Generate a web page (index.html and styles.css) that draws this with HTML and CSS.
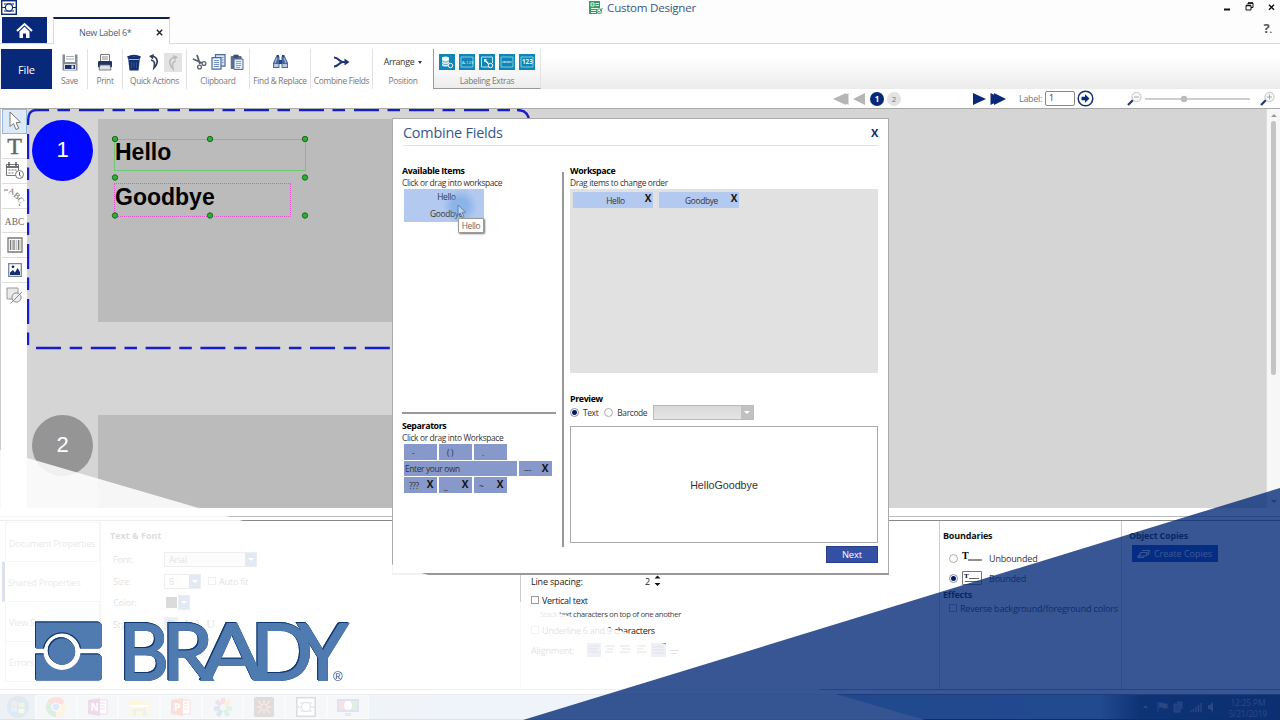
FILE: index.html
```html
<!DOCTYPE html>
<html lang="en">
<head>
    <meta charset="UTF-8">
    <title>Custom Designer</title>
    <link rel="stylesheet" href="styles.css">
</head>
<body>

<div class="app">
    <header class="titlebar">
        <svg class="app-logo" width="16" height="15" viewBox="0 0 16 15"><rect x=".7" y=".7" width="14.6" height="13.6" fill="#fff" stroke="#0b2a72" stroke-width="1.4"/><path d="M1 7.5h3M12 7.5h3M3 4h10M3 11h10" stroke="#0b2a72" stroke-width="1"/><circle cx="8" cy="7.5" r="3.6" fill="#fff" stroke="#0b2a72" stroke-width="1.2"/></svg>
        <div class="app-title">
            <svg width="14" height="14" viewBox="0 0 14 14"><path d="M0 0h11v7h-3v6H0z" fill="#3c9a67"/><path d="M2 2h3v3H2zM6.5 2.5H10M6.5 4.500H10M2 7.5h6M2 9.5h5M2 11.5h5" stroke="#e4f5ea" stroke-width="1" fill="none"/><circle cx="10.3" cy="10.2" r="2.4" fill="#fff" stroke="#3c9a67"/><path d="M9 10l1.2 1.2L13.5 7" fill="none" stroke="#3c9a67"/></svg>
            <span>Custom Designer</span>
        </div>
        <div class="window-buttons">
            <svg width="60" height="14" viewBox="0 0 60 14"><path d="M4 9.500h6" stroke="#111" stroke-width="2"/><path d="M28 4.500V3h5v4.500h-2M26 5.500h5v4.500h-5z" fill="none" stroke="#111" stroke-width="1"/><path d="M26 5.500h5M28 3h5" stroke="#111" stroke-width="1.500"/><path d="M49 4.700l5 5M54 4.700l-5 5" stroke="#111" stroke-width="1.400"/></svg>
        </div>
    </header>

    <nav class="tabs">
        <div class="home">
            <svg width="17" height="17" viewBox="0 0 17 17"><path d="M1 9L8.500 2 16 9" fill="none" stroke="#fff" stroke-width="2"/><path d="M3.500 9.500l5-4.700 5 4.700V16H10v-4.500H7V16H3.500z" fill="#fff"/></svg>
        </div>
        <div class="tab"><span>New Label 6*</span><svg width="7" height="7" viewBox="0 0 7 7"><path d="M.8.8l5.400 5.400M6.200.8L.8 6.200" stroke="#222" stroke-width="1.400"/></svg></div>
        <div class="help">?<small>.</small></div>
    </nav>

    <div class="ribbon">
        <div class="file">File</div>
        <div class="group save">
            <div class="icons"><svg width="16" height="17" viewBox="0 0 16 17"><path d="M.5.500h15v16H.5z" fill="#868b95"/><path d="M3 0h10v8H3z" fill="#fff"/><path d="M4 2.500h8M4 5h8" stroke="#aaa"/><path d="M2.500 10.500h11v5h-11z" fill="#17306f" stroke="#fff" stroke-width=".8"/><path d="M9.500 11.500h2v3h-2z" fill="#fff"/></svg></div>
            <span>Save</span>
        </div>
        <div class="group print">
            <div class="icons"><svg width="16" height="17" viewBox="0 0 16 17"><path d="M3.500.500h9V8h-9z" fill="#fff" stroke="#777"/><path d="M5 3h6M5 5h6" stroke="#888"/><rect x="1" y="7" width="14" height="6.500" rx="1" fill="#203468"/><path d="M3 11h10l1 5H2z" fill="#dce1eb" stroke="#666" stroke-width=".8"/></svg></div>
            <span>Print</span>
        </div>
        <div class="group quick">
            <div class="icons">
                <svg width="14" height="17" viewBox="0 0 14 17"><path d="M1 3h12l-1.500 13.500h-9z" fill="#14306f"/><path d="M.5 3.500Q7 0 13.500 3.500" fill="none" stroke="#14306f" stroke-width="2"/><path d="M2 5.500h10" stroke="#9db0d8"/><path d="M4.500 8v6M7 8v6M9.500 8v6" stroke="#36569a" stroke-width=".8"/></svg>
                <svg class="undo" width="12" height="16" viewBox="0 0 12 16"><path d="M4 2C10 3 11 9 6 14c1-5 1-7-3-8" fill="none" stroke="#313c59" stroke-width="1.700"/><path d="M6 0L1 2l4 3.500z" fill="#313c59"/></svg>
                <span class="redo"><svg width="12" height="16" viewBox="0 0 12 16"><path d="M8 2C2 3 1 9 6 14c-1-5-1-7 3-8" fill="none" stroke="#bcbcbc" stroke-width="1.600"/><path d="M6 0l5 2-4 3.500z" fill="#bcbcbc"/></svg></span>
            </div>
            <span>Quick Actions</span>
        </div>
        <div class="group clipboard">
            <div class="icons">
                <svg width="15" height="16" viewBox="0 0 15 16"><path d="M5 1l3 9M1 5l9 4" stroke="#56606c" stroke-width="1.800"/><circle cx="12" cy="9.500" r="1.900" fill="none" stroke="#56606c" stroke-width="1.300"/><circle cx="7.500" cy="13" r="1.900" fill="none" stroke="#56606c" stroke-width="1.300"/></svg>
                <svg width="15" height="16" viewBox="0 0 15 16"><path d="M4.500.700H14v11.500H4.500z" fill="#d9e5f6" stroke="#49699c" stroke-width="1.200"/><path d="M1 3.700h9v11.500H1z" fill="#eaf1fb" stroke="#49699c" stroke-width="1.200"/><path d="M3 6.500h5M3 8.500h5M3 10.500h5M3 12.500h5M11 3.500h1.500M11 6h1.500M11 8.500h1.500" stroke="#6a88b7" stroke-width=".9"/></svg>
                <svg width="14" height="16" viewBox="0 0 14 16"><rect x=".7" y="2" width="11" height="13" rx="1" fill="#5f6e8b"/><path d="M3.500.700h5v3h-5z" fill="#384b70"/><path d="M4 5h9v10.400H4z" fill="#e4edfa" stroke="#4d689a"/><path d="M6 7.500h5M6 9.500h5M6 11.500h5M6 13.500h4" stroke="#7690ba" stroke-width=".8"/></svg>
            </div>
            <span>Clipboard</span>
        </div>
        <div class="group find">
            <div class="icons"><svg width="17" height="16" viewBox="0 0 17 16"><path d="M4 2.500h3.500V14H1V9z" fill="#4767a0"/><path d="M13 2.500H9.500V14H16V9z" fill="#4767a0"/><path d="M4.500 1h2.500v2H4.500zM10 1h2.500v2H10zM7 6h3v4H7z" fill="#25437e"/><path d="M2 10h4.500v3H2zM10.500 10H15v3h-4.500z" fill="#b7cbe9"/><path d="M5 4L3 9M12 4l2 5" stroke="#9ab3dc" stroke-width="1.300"/></svg></div>
            <span>Find &amp; Replace</span>
        </div>
        <div class="group combine">
            <div class="icons"><svg width="17" height="12" viewBox="0 0 17 12"><path d="M1 1.500c5 0 5 4.500 9 4.500M1 10.500c5 0 5-4.500 9-4.500h3" fill="none" stroke="#1f3572" stroke-width="2"/><path d="M11.500 2.500L16.500 6l-5 3.500z" fill="#1f3572"/></svg></div>
            <span>Combine Fields</span>
        </div>
        <div class="group position">
            <div class="icons arrange">Arrange <i class="caret"></i></div>
            <span>Position</span>
        </div>
        <div class="group extras">
            <div class="icons">
                <svg class="tile" width="16" height="16" viewBox="0 0 16 16"><path d="M3 4v7c0 2 7 2 7 0V4" fill="#e4f5fb"/><ellipse cx="6.500" cy="4" rx="3.500" ry="1.500" fill="#fff"/><path d="M3 6.500c0 2 7 2 7 0M3 9c0 2 7 2 7 0" fill="none" stroke="#0f86b5" stroke-width=".7"/><circle cx="11.500" cy="11.500" r="2.200" fill="#0f86b5" stroke="#fff"/></svg>
                <svg class="tile" width="16" height="16" viewBox="0 0 16 16"><path d="M2 3h12v10H2z" fill="none" stroke="#8ed0e6" stroke-width=".9"/><text x="3" y="9.600" font-size="4.300">A-123</text></svg>
                <svg class="tile" width="16" height="16" viewBox="0 0 16 16"><path d="M10 13H2.500V3h11v6" fill="none" stroke="#bde5f2"/><path d="M5 5l3 .2-1 1 3 3-1 1-3-3-1 1z" fill="#fff"/><circle cx="11.500" cy="11.500" r="2.200" fill="#0f86b5" stroke="#fff"/></svg>
                <svg class="tile" width="16" height="16" viewBox="0 0 16 16"><path d="M2 3h12v10H2z" fill="none" stroke="#8ed0e6" stroke-width=".9"/><path d="M3.500 8h9" stroke="#9ed7ea" stroke-width="2" stroke-dasharray="1 .4"/></svg>
                <svg class="tile" width="16" height="16" viewBox="0 0 16 16"><path d="M2 3h12v10H2z" fill="none" stroke="#8ed0e6" stroke-width=".9"/><text x="3" y="10.300" font-size="6.300" font-weight="bold">123</text></svg>
            </div>
            <span>Labeling Extras</span>
        </div>
    </div>

    <div class="pager">
        <svg width="34" height="14" viewBox="0 0 34 14"><path d="M0 7l13-6v12zM5 7l10.500-6v12zM20 7l12-6v12z" fill="#b5b5b5"/></svg>
        <span class="page active">1</span>
        <span class="page">2</span>
        <svg class="forward" width="34" height="14" viewBox="0 0 34 14"><path d="M0 1l13 6-13 6zM17.500 1l12 6-12 6zM21 1l12 6-12 6z" fill="#08297a"/></svg>
        <span class="label-caption">Label:</span>
        <span class="label-input">1</span>
        <svg class="go" width="17" height="17" viewBox="0 0 17 17"><circle cx="8.500" cy="8.500" r="7.300" fill="#fff" stroke="#15306f" stroke-width="1.500"/><path d="M4.500 6.800H8V4.300l4.500 4.200L8 12.700v-2.500H4.500z" fill="#08297a"/></svg>
        <svg class="zoombar" width="150" height="16" viewBox="0 0 150 16"><path d="M2 14l5-5" stroke="#253b72" stroke-width="2.300"/><circle cx="10.500" cy="6" r="4.600" fill="#f7f7f7" stroke="#c2c2c2"/><path d="M8 6h5" stroke="#aaa"/><path d="M19 8h105" stroke="#bdbdbd" stroke-width="1.500"/><circle cx="58" cy="8" r="3.200" fill="#bbb"/><path d="M135 14l5-5" stroke="#253b72" stroke-width="2.300"/><circle cx="143.500" cy="6" r="4.600" fill="#f7f7f7" stroke="#c2c2c2"/><path d="M141 6h5M143.500 3.500v5" stroke="#aaa"/></svg>
    </div>

    <main class="editor">
        <aside class="tools">
            <div class="tool selected"><svg width="16" height="20" viewBox="0 0 16 20"><path d="M3 1v14.500l3.500-3 2.500 6 2.700-1.200-2.600-5.600 4.400-.5z" fill="#fff" stroke="#777"/></svg></div>
            <div class="tool tool-t">T</div>
            <div class="tool"><svg width="20" height="18" viewBox="0 0 20 18"><path d="M1.500 2.500h12v11h-12z" fill="#fff" stroke="#777"/><path d="M4 0v4M11 0v4M1.500 5h12" stroke="#444" stroke-width="1.300"/><path d="M3.500 8h8M3.500 11h6" stroke="#777" stroke-dasharray="2 1"/><circle cx="14.500" cy="12.500" r="4" fill="#fff" stroke="#777"/><path d="M14.500 10v3l1.500 1.500" fill="none" stroke="#555"/></svg></div>
            <div class="tool"><svg class="arc-text" width="22" height="20" viewBox="0 0 22 20"><path d="M0 4h4M15 18l1 2" stroke="#777"/><text x="4" y="7" transform="rotate(18 4 7)">A</text><text x="9" y="10" transform="rotate(40 9 10)">B</text><text x="13" y="13" transform="rotate(60 13 13)">C</text></svg></div>
            <div class="tool tool-abc">ABC</div>
            <div class="tool"><svg width="16" height="16" viewBox="0 0 16 16"><path d="M1 1h14v14H1z" fill="#fff" stroke="#777" stroke-width="1.300"/><path d="M3.500 3v10M7 3v10M11.500 3v10" stroke="#777" stroke-width="1.300"/><path d="M5.300 3v10M9.200 3v10M13 3v10" stroke="#999" stroke-width=".8"/></svg></div>
            <div class="tool"><svg width="14" height="14" viewBox="0 0 14 14"><path d="M.7.700h12.600v12.600H.7z" fill="#fff" stroke="#79869f" stroke-width="1.300"/><path d="M2 12V9.500L5 7l2 2.500L9.500 5 12 9v3z" fill="#14306a"/><circle cx="5" cy="3.800" r="1.400" fill="#14306a"/></svg></div>
            <div class="tool"><svg width="17" height="17" viewBox="0 0 17 17"><path d="M1 1h11v11H1z" fill="#e9e9e9" stroke="#999"/><circle cx="10.500" cy="10.500" r="4.600" fill="#eee" stroke="#888"/><path d="M4.500 16.500L16 5" stroke="#888"/></svg></div>
        </aside>
        <div class="canvas">
            <div class="label-area first"></div>
            <div class="label-area second"></div>
            <svg class="label-frame" width="506" height="243" viewBox="0 0 506 243">
                <path d="M53 2H494" stroke-dasharray="25 8.500 12.500 9"/>
                <path d="M2 17C2 7 3 2 11 2H23M31.500 2H44"/>
                <path d="M2 26V237" stroke-dasharray="25 8.500 12.500 9"/>
                <path d="M10 240H400" stroke-dasharray="25 8.700 12.500 8.600"/>
                <path d="M491 2Q503 2 503 14"/>
            </svg>
            <div class="badge one">1</div>
            <div class="badge two">2</div>
            <div class="text-object hello">Hello</div>
            <div class="text-object goodbye">Goodbye</div>
            <svg class="handles" width="200" height="86" viewBox="0 0 200 86">
                <g fill="#2fae36" stroke="#176c1d"><circle cx="5" cy="5" r="2.700"/><circle cx="100" cy="5" r="2.700"/><circle cx="195" cy="5" r="2.700"/><circle cx="5" cy="43.500" r="2.700"/><circle cx="195" cy="43.500" r="2.700"/><circle cx="5" cy="81.500" r="2.700"/><circle cx="100" cy="81.500" r="2.700"/><circle cx="195" cy="81.500" r="2.700"/></g>
            </svg>
        </div>
        <div class="scrollbar"><i class="up"></i><div class="thumb"></div><i class="down"></i></div>
    </main>

    <div class="splitter"></div>

    <section class="properties">
        <ul class="side-tabs">
            <li>Document Properties</li>
            <li class="current">Shared Properties</li>
            <li>View Settings</li>
            <li>Errors</li>
        </ul>
        <div class="panel font-panel">
            <h4>Text &amp; Font</h4>
            <div class="field"><label>Font:</label><span class="select wide">Arial<b></b></span></div>
            <div class="field"><label>Size:</label><span class="select narrow">8<b></b></span><i class="check"></i>Auto fit</div>
            <div class="field"><label>Color:</label><span class="swatch"></span><span class="select color"><b></b></span></div>
            <div class="field"><label>Style:</label><span class="style-buttons"><b>B</b> <i>I</i> A U</span></div>
        </div>
        <div class="panel spacing-panel">
            <div class="spacing"><span>Line spacing:</span><span class="number">2</span><svg width="7" height="14" viewBox="0 0 7 14"><path d="M.5 4.500l3-3 3 3zM.5 9l3 3 3-3z" fill="#111"/></svg></div>
            <div class="option"><i class="check"></i>Vertical text</div>
            <p class="hint">Stack text characters on top of one another</p>
            <div class="option underline"><i class="check"></i>Underline 6 and 9 characters</div>
            <div class="alignment"><span>Alignment:</span>
                <svg width="100" height="16" viewBox="0 0 100 16"><path d="M4 0h14v14H4zM68 0h15v14H68z" fill="#7f98cf"/><path d="M6 3h10M6 6h8M6 9h10M22 3h10M24 6h6M22 9h8M37 3h10M39 6h8M37 9h10M54 3h9M54 6h6M54 9h9M70 4h11M70 7h11M70 10h11M87 7.500h9M88 10.500h6" stroke="#333"/></svg>
            </div>
        </div>
        <div class="panel boundary-panel">
            <h4>Boundaries</h4>
            <div class="radio-row"><i class="radio"></i><svg width="20" height="14" viewBox="0 0 20 14"><text x="0" y="8" font-size="10">T</text><path d="M6 9h14" stroke="#555" stroke-width="1.300"/></svg><span>Unbounded</span></div>
            <div class="radio-row bounded"><i class="radio on"></i><svg width="20" height="14" viewBox="0 0 20 14"><path d="M.5.500h19v13H.5z" fill="none" stroke="#777"/><text x="2" y="7" font-size="7">T</text><path d="M7 7.500h10M3 10.500h14" stroke="#666" stroke-width="1.200"/></svg><span>Bounded</span></div>
            <h4 class="effects">Effects</h4>
            <div class="reverse"><i class="check"></i>Reverse background/foreground colors</div>
        </div>
        <div class="panel copies-panel">
            <h4>Object Copies</h4>
            <div class="copies-button"><svg width="12" height="8" viewBox="0 0 12 8"><path d="M4 .5h7.500l-1 4H8.500M2.500 2.500H9l-1 3.500H1.500zM.5 5l-.3 2.500H6" fill="none" stroke="#fff" stroke-width="1.200"/></svg>Create Copies</div>
        </div>
    </section>

    <footer class="taskbar">
        <div class="task start"><svg width="24" height="24" viewBox="0 0 24 24"><circle cx="12" cy="12" r="11" fill="#1766a8"/><path d="M5 7q3-2 6 0v4.500q-3-2-6 0z" fill="#e9652b"/><path d="M12.500 7q3 2 6 0v4.500q-3 2-6 0z" fill="#7db93b"/><path d="M5 13q3-2 6 0v4.500q-3-2-6 0z" fill="#35a3e0"/><path d="M12.500 13q3 2 6 0v4.500q-3 2-6 0z" fill="#f4c534"/></svg></div>
        <div class="task"><svg width="20" height="20" viewBox="0 0 20 20"><path d="M10 10L1.300 5A10 10 0 0118.700 5z" fill="#df2413"/><path d="M10 10V20A10 10 0 011.300 5z" fill="#0b8e31"/><path d="M10 10l8.700-5A10 10 0 0110 20z" fill="#f3ba15"/><circle cx="10" cy="10" r="4.600" fill="#fff"/><circle cx="10" cy="10" r="3.500" fill="#1263ec"/></svg></div>
        <div class="task"><svg class="office" width="20" height="20" viewBox="0 0 20 20"><path d="M9 3h10v14H9z" fill="#fff" stroke="#7b006a"/><path d="M12 6h5M12 9h5M12 12h5" stroke="#7b006a"/><path d="M0 3l12-2v18L0 17z" fill="#7b006a"/><text x="2.500" y="14">N</text></svg></div>
        <div class="task"><svg width="22" height="20" viewBox="0 0 22 20"><path d="M1 2h8l2 2h10v15H1z" fill="#f2c431"/><path d="M2 8h18v2H2z" fill="#fff"/><path d="M5 12h13v7H5z" fill="#58a6dc"/><path d="M8 14h7v5H8z" fill="#f2c431"/></svg></div>
        <div class="task"><svg class="office" width="20" height="20" viewBox="0 0 20 20"><path d="M9 3h10v14H9z" fill="#fff" stroke="#d22605"/><path d="M13 6h4M13 9h4M13 12h4" stroke="#d22605"/><path d="M0 3l12-2v18L0 17z" fill="#d22605"/><text x="3" y="14">P</text></svg></div>
        <div class="task"><svg width="20" height="20" viewBox="0 0 20 20"><g stroke-width="4.500"><path d="M10 7V1" stroke="#e92525"/><path d="M12 8l5-4" stroke="#ed861b"/><path d="M13 11l6 1" stroke="#2bae43"/><path d="M12 13l3 6" stroke="#0b9e7a"/><path d="M8 13l-3 6" stroke="#06507f"/><path d="M7 11l-6 1" stroke="#1254ad"/><path d="M8 8L3 4" stroke="#80318f"/></g></svg></div>
        <div class="task"><svg width="20" height="20" viewBox="0 0 20 20"><rect width="20" height="20" rx="2" fill="#280802"/><path d="M4 4l12 12M16 4L4 16M10 3v14M3 10h14" stroke="#e55e3a" stroke-width="1.300"/><circle cx="10" cy="10" r="3" fill="#280802" stroke="#e55e3a"/></svg></div>
        <div class="task"><svg width="20" height="20" viewBox="0 0 20 20"><path d="M.8.800h18.400v18.400H.8z" fill="#fff" stroke="#08183f" stroke-width="1.600"/><path d="M1 10h4M15 10h4M4 6h12M4 14h12" stroke="#08183f"/><circle cx="10" cy="10" r="4.500" fill="#fff" stroke="#08183f"/></svg></div>
        <div class="task"><svg width="22" height="20" viewBox="0 0 22 20"><path d="M0 2h22v13H0z" fill="#1837a0"/><path d="M2 4h6v9H2z" fill="#e62020"/><path d="M8 4h6v9H8z" fill="#f0a918"/><path d="M14 4h6v9h-6z" fill="#21973b"/><circle cx="11" cy="8.500" r="4" fill="#fff"/><path d="M8 16h6v3H8z" fill="#666"/></svg></div>
        <div class="tray">
            <svg width="74" height="14" viewBox="0 0 74 14"><path d="M2 8l2.500-3L7 8z" fill="#bbb"/><path d="M17 2v10M18 3h4v4h-4M22 4h4v4h-4" fill="#bbb" stroke="#bbb"/><path d="M33 4h6v8h-6zM36 2h5v7" fill="#8292a8" stroke="#bbb"/><path d="M50 12v-2M52.500 12V9M55 12V7M57.500 12V5M60 12V3" stroke="#bbb" stroke-width="1.300"/><path d="M67 5h2l3-3v10l-3-3h-2z" fill="#bbb"/></svg>
            <div class="clock">12:25 PM<br>5/21/2019</div>
        </div>
    </footer>
</div>

<div class="dialog">
    <div class="dialog-head"><h2>Combine Fields</h2><b>X</b></div>
    <div class="dialog-body">
        <div class="left-column">
            <div class="available">
                <h4>Available Items</h4>
                <p>Click or drag into workspace</p>
                <div class="item-list"><span>Hello</span><span>Goodbye</span></div>
            </div>
            <div class="separators">
                <h4>Separators</h4>
                <p>Click or drag into Workspace</p>
                <div class="sep-row"><span class="sep">-</span><span class="sep">( )</span><span class="sep">.</span></div>
                <div class="sep-row"><span class="sep own">Enter your own</span><span class="sep">---<b>X</b></span></div>
                <div class="sep-row"><span class="sep">???<b>X</b></span><span class="sep">_<b>X</b></span><span class="sep">~<b>X</b></span></div>
            </div>
        </div>
        <div class="right-column">
            <h4>Workspace</h4>
            <p>Drag items to change order</p>
            <div class="drop-area"><span class="chip">Hello<b>X</b></span><span class="chip">Goodbye<b>X</b></span></div>
            <h4 class="preview-title">Preview</h4>
            <div class="preview-mode"><i class="radio on"></i><span>Text</span><i class="radio"></i><span>Barcode</span><div class="dropdown"><b></b></div></div>
            <div class="preview">HelloGoodbye</div>
            <div class="next">Next</div>
        </div>
    </div>
    <div class="click-glow"></div>
    <svg class="cursor" width="10" height="15" viewBox="0 0 10 15"><path d="M1 1v10l2.300-2 2 4.500 1.800-.8-2-4.300 3.400-.3z" fill="#b9d2f2" stroke="#5d7396" stroke-width=".8"/></svg>
    <div class="tooltip">Hello</div>
</div>

<svg class="overlay" width="1280" height="720" viewBox="0 0 1280 720">
    <path d="M0 450L925 720H0z" fill="#fff" fill-opacity=".86"/>
    <path d="M1280 488L523 720H1280z" fill="#052c78" fill-opacity=".8"/>
</svg>

<svg class="brand" width="320" height="70" viewBox="0 0 320 70">
    <g class="brand-mark">
        <path d="M5 3.500H67Q71 3.500 71 7V25Q71 29.500 67 29.500H5z"/>
        <path d="M5 35.500H67Q71 35.500 71 40V58Q71 61.500 67 61.500H5z"/>
    </g>
    <circle cx="31" cy="32.500" r="18.500" fill="#fff"/>
    <path d="M12.500 29.300A18.800 18.800 0 0149.500 29.300" fill="none" stroke="#0d376f" stroke-width="1.200"/>
    <circle class="brand-mark" cx="31" cy="32.500" r="13.200"/>
    <g class="brand-name">
        <text x="88" y="60.500" textLength="50" lengthAdjust="spacingAndGlyphs">B</text>
        <text x="131" y="60.500" textLength="51" lengthAdjust="spacingAndGlyphs">R</text>
        <text x="170" y="60.500" textLength="62" lengthAdjust="spacingAndGlyphs">A</text>
        <text x="220" y="60.500" textLength="62" lengthAdjust="spacingAndGlyphs">D</text>
        <text x="267" y="60.500" textLength="50" lengthAdjust="spacingAndGlyphs">Y</text>
    </g>
    <text class="reg" x="302" y="62">®</text>
</svg>

</body>
</html>
```
FILE: styles.css
```css
:root {
    --navy: #08297a;
    --title: #375789;
    --line: #d9d9d9;
    --chip: #b3c9ef;
    --sep: #8799ca;
}

* {
    margin: 0;
    padding: 0;
    box-sizing: border-box;
}

body {
    width: 1280px;
    height: 720px;
    overflow: hidden;
    position: relative;
    background: #fff;
    color: #333;
    font-family: "Open Sans", "Noto Sans", sans-serif;
    font-size: 8.8px;
    letter-spacing: -.15px;
}

svg {
    display: block;
    flex: none;
    overflow: visible;
    letter-spacing: 0;
}

.app {
    display: flex;
    flex-direction: column;
    height: 720px;
}

/* title bar and tabs */
.titlebar {
    height: 16px;
    display: flex;
    justify-content: space-between;
    background: #fdfdfd;
    padding-left: 1px;
}

.app-title {
    display: flex;
    gap: 4px;
    padding-top: 1px;
    padding-left: 48px;
    font-size: 11.6px;
    letter-spacing: -.27px;
    line-height: 14px;
    color: var(--title);
}

.window-buttons {
    width: 60px;
}

.tabs {
    height: 28px;
    display: flex;
    padding: 1px 8px 0 2px;
    background: #fdfdfd;
    border-bottom: 1px solid var(--line);
}

.home {
    width: 45px;
    height: 26px;
    background: var(--navy);
    display: flex;
    align-items: center;
    justify-content: center;
}

.tab {
    width: 117px;
    height: 27px;
    margin-left: 6px;
    background: #fff;
    border: 1px solid var(--line);
    border-top: 2px solid #0a2250;
    border-bottom: 0;
    display: flex;
    align-items: center;
    justify-content: space-between;
    padding: 1px 6px 0 25px;
    font-size: 9px;
    letter-spacing: -.3px;
    color: #4b5c80;
}

.help {
    margin-left: auto;
    padding-top: 3px;
    font-size: 13px;
    line-height: 16px;
    font-weight: bold;
    color: #555;
}

.help small {
    font-size: 9px;
}

/* ribbon */
.ribbon {
    height: 45px;
    display: flex;
    padding: 5px 0 0 1px;
    background: linear-gradient(#fff 30%, #ebebeb);
}

.file {
    width: 51px;
    background: var(--navy);
    color: #fff;
    font-size: 11px;
    line-height: 42px;
    text-align: center;
}

.group {
    border-right: 1px solid #e2e2e2;
    background: #fff;
    display: flex;
    flex-direction: column;
    align-items: center;
    font-size: 8.4px;
    letter-spacing: -.3px;
    color: #777;
    white-space: nowrap;
}

.group > span {
    line-height: 12px;
}

.icons {
    height: 26px;
    display: flex;
    align-items: center;
    justify-content: center;
    gap: 4px;
}

.save { width: 36px; }
.print { width: 35px; }
.quick { width: 64px; }
.clipboard { width: 63px; }
.find { width: 61px; }
.combine { width: 62px; }
.position { width: 60px; border: 0; }

.undo {
    margin-left: 3px;
}

.redo {
    width: 18px;
    height: 19px;
    padding: 2px 3px;
    background: #e3e3e3;
}

.arrange {
    color: #333;
    font-size: 8.8px;
}

.caret {
    border: 2.5px solid transparent;
    border-top: 3px solid #223a70;
    border-bottom: 0;
}

.extras {
    width: 108px;
    background: linear-gradient(#fff 30%, #ececec);
    border-left: 1px solid #999;
    border-bottom: 1px solid #999;
}

.tile {
    background: #0f86b5;
}

.tile text {
    fill: #e6f6fb;
    font-family: "Open Sans", sans-serif;
}

/* pager */
.pager {
    height: 20px;
    display: flex;
    align-items: center;
    padding-left: 833px;
    border-bottom: 1px solid #aaa;
    background: #fff;
    color: #777;
}

.page {
    width: 14px;
    height: 14px;
    border-radius: 50%;
    margin-left: 3px;
    background: #e3e3e3;
    font-size: 8px;
    line-height: 14px;
    text-align: center;
}

.page.active {
    background: var(--navy);
    color: #fff;
    font-weight: bold;
}

.forward {
    margin-left: 72px;
}

.label-caption {
    margin-left: 12px;
    width: 26px;
    font-size: 9px;
    letter-spacing: -.3px;
}

.label-input {
    width: 30px;
    height: 15px;
    border: 1px solid #888;
    border-radius: 2px;
    padding-left: 3px;
    line-height: 13px;
    color: #333;
}

.go {
    margin-left: 2px;
}

.zoombar {
    margin-left: 32px;
}

/* editor */
.editor {
    height: 399px;
    display: flex;
}

.tools {
    width: 27px;
    padding-left: 1px;
    background: #fff;
    border-left: 1px solid #ccc;
}

.tool {
    height: 24.9px;
    border-bottom: 1px solid #ddd;
    display: flex;
    align-items: center;
    justify-content: center;
    color: #666;
    letter-spacing: 0;
    font-family: "Liberation Serif", serif;
}

.tool.selected {
    background: #dceaf8;
    border: 1px solid #95b9dd;
}

.tool:last-child {
    border: 0;
}

.tool-t {
    padding-top: 2px;
    font-size: 24px;
    -webkit-text-stroke: .4px #666;
}

.tool-abc {
    padding-top: 2px;
    font-size: 9.4px;
}

.arc-text text {
    font-size: 8.5px;
    fill: #666;
}

.canvas {
    flex: 1;
    position: relative;
    background: #d5d5d5;
    overflow: hidden;
}

.label-area {
    position: absolute;
    left: 71px;
    width: 420px;
    background: #bbb;
}

.first {
    top: 10px;
    height: 203px;
}

.second {
    top: 306px;
    height: 93px;
}

.label-frame {
    position: absolute;
    left: -1px;
    top: -1px;
    fill: none;
    stroke: #171fcb;
    stroke-width: 2.4;
}

.badge {
    position: absolute;
    left: 5px;
    width: 61px;
    height: 61px;
    border-radius: 50%;
    color: #fff;
    font-family: "Liberation Sans", sans-serif;
    font-size: 22px;
    line-height: 60px;
    text-align: center;
}

.one {
    top: 11px;
    background: #0008ff;
}

.two {
    top: 306px;
    background: #959595;
}

.text-object {
    position: absolute;
    left: 87px;
    padding-left: 0;
    font: bold 23px/24px "Liberation Sans", sans-serif;
    letter-spacing: 0;
    color: #000;
}

.hello {
    top: 30px;
    width: 192px;
    height: 32px;
    border: 1px solid #6fc873;
}

.goodbye {
    top: 74px;
    width: 177px;
    height: 34px;
    line-height: 26px;
    border: 1px dotted #df57cf;
}

.handles {
    position: absolute;
    left: 83px;
    top: 25px;
}

.scrollbar {
    width: 14px;
    background: #f7f7f7;
    border-left: 1px solid #ddd;
    display: flex;
    flex-direction: column;
    align-items: center;
    padding: 5px 0;
}

.scrollbar i {
    border: 3px solid transparent;
}

.scrollbar .up {
    border-top: 0;
    border-bottom-color: #999;
}

.scrollbar .down {
    border-bottom: 0;
    border-top-color: #777;
    margin-top: auto;
}

.thumb {
    width: 5px;
    height: 254px;
    margin-top: 4px;
    border-radius: 3px;
    background: #c4c4c4;
}

.splitter {
    height: 13px;
    background: linear-gradient(#fff 8px, #bbb 8px, #bbb 9px, #fff 9px, #fff 12px, #888 12px);
}

/* properties */
.properties {
    height: 169px;
    display: flex;
    border-bottom: 1px solid #999;
    font-size: 9px;
    letter-spacing: -.18px;
}

.side-tabs {
    width: 100px;
    list-style: none;
    padding: 1px 0 0 5px;
    color: #555;
}

.side-tabs li {
    height: 40px;
    line-height: 42px;
    padding-left: 3px;
    white-space: nowrap;
    border: 1px solid #bbb;
    border-top-width: 0;
}

.side-tabs li.current {
    border-left: 3px solid var(--navy);
    margin-left: -3px;
    border-right: 0;
}

.side-tabs li:first-child {
    border-top-width: 1px;
}

.panel h4 {
    font-size: 9px;
    line-height: 12px;
    color: #111;
}

.font-panel {
    width: 420px;
    padding: 9px 0 0 9px;
    border-left: 1px solid #bbb;
    color: #222;
}

.font-panel h4 {
    letter-spacing: 0;
    color: #000;
}

.field {
    height: 21.5px;
    display: flex;
    align-items: center;
    padding-left: 3px;
}

.font-panel h4 + .field {
    margin-top: 7px;
}

.field label {
    width: 51px;
}

.select {
    height: 15px;
    border: 1px solid #888;
    background: #e6e6e6;
    display: flex;
    justify-content: space-between;
    line-height: 13px;
    padding-left: 4px;
}

.select b {
    width: 11px;
    background: #3d5fb8;
    display: flex;
    align-items: center;
    justify-content: center;
}

.select b::after {
    content: "";
    border: 3px solid transparent;
    border-top-color: #fff;
    border-bottom: 0;
}

.wide { width: 93px; }
.narrow { width: 37px; background: #fff; margin-right: 7px; }
.color { width: 12px; padding: 0; }

.swatch {
    width: 11px;
    height: 11px;
    margin: 0 1px 0 2px;
    background: #000;
}

.style-buttons {
    font-family: "Liberation Serif", serif;
    font-size: 12px;
    line-height: 14px;
    word-spacing: 3px;
}

.style-buttons b {
    background: #7f98cf;
    padding: 0 3px;
}

.check {
    display: inline-block;
    width: 8px;
    height: 8px;
    border: 1px solid #999;
    background: #fff;
    margin-right: 3px;
}

.spacing-panel {
    width: 419px;
    padding: 52px 0 0 10px;
    border-left: 1px solid #ccc;
    color: #222;
}

.spacing {
    height: 16px;
    display: flex;
    align-items: center;
}

.spacing span:first-child {
    width: 79px;
}

.number {
    width: 40px;
    text-align: right;
    margin-right: 4px;
}

.option {
    height: 16px;
    margin-top: 3px;
    display: flex;
    align-items: center;
    letter-spacing: -.3px;
}

.hint {
    font-size: 7.8px;
    letter-spacing: -.38px;
    line-height: 12px;
    padding-left: 9px;
    color: #444;
}

.underline {
    margin-top: 2px;
}

.alignment {
    display: flex;
    align-items: center;
    margin-top: 4px;
    height: 17px;
}

.alignment span {
    width: 52px;
}

.boundary-panel {
    width: 182px;
    padding: 9px 0 0 3px;
    border-left: 1px solid #ccc;
    white-space: nowrap;
}

.radio {
    display: inline-block;
    width: 9px;
    height: 9px;
    border: 1px solid #aaa;
    border-radius: 50%;
    background: #fff;
    flex: none;
}

.radio.on {
    border-color: #8290ad;
    background: radial-gradient(circle, #061b5c 2px, #fff 3px);
}

.radio-row {
    display: flex;
    align-items: center;
    height: 20px;
    margin-top: 6px;
    padding-left: 6px;
}

.radio-row.bounded {
    margin-top: 0;
}

.radio-row svg {
    margin: 0 7px 0 4px;
}

.radio-row text {
    font-family: "Liberation Serif", serif;
    font-weight: bold;
}

.panel h4.effects {
    padding-top: 1px;
}

.reverse {
    padding: 2px 0 0 6px;
    line-height: 12px;
}

.copies-panel {
    flex: 1;
    padding: 9px 0 0 7px;
    border-left: 1px solid #ccc;
}

.copies-button {
    width: 86px;
    height: 17px;
    margin: 3px 0 0 3px;
    background: #0834b0;
    color: #fff;
    display: flex;
    align-items: center;
    justify-content: center;
    gap: 4px;
    letter-spacing: 0;
}

/* taskbar */
.taskbar {
    height: 26px;
    margin-top: 4px;
    display: flex;
    border-top: 1px solid #6f8199;
    border-bottom: 1px solid #333;
    background: linear-gradient(90deg, #8097b5 0, #93b3d6 400px, #8fb2da 523px, #96c2eb 1100px, #33506c 1140px, #253e58);
}

.task {
    width: 41.7px;
    border: 1px solid #dbe4ef;
    background: #bac7d6;
    display: flex;
    align-items: center;
    justify-content: center;
}

.task.start {
    width: 35px;
    background: none;
    border: 0;
}

.office text {
    font-size: 10px;
    font-weight: bold;
    fill: #fff;
}

.tray {
    margin-left: auto;
    display: flex;
    gap: 14px;
    padding: 5px 13px 0 0;
    color: #bbb;
}

.clock {
    font-size: 8.4px;
    line-height: 11px;
    margin-top: -3px;
    text-align: center;
}

/* dialog */
.dialog {
    position: absolute;
    left: 392px;
    top: 118px;
    width: 497px;
    height: 457px;
    background: #fff;
    border: 1px solid #aaa;
    border-bottom: 2px solid #999;
    color: #333;
    font-size: 8.4px;
    letter-spacing: -.35px;
}

.dialog h4 {
    font-size: 8.8px;
    line-height: 11px;
    color: #000;
}

.dialog p {
    line-height: 12px;
}

.dialog-head {
    height: 27px;
    margin: 0 10px;
    display: flex;
    justify-content: space-between;
    align-items: center;
    border-bottom: 1px solid #e3e3e3;
}

.dialog-head h2 {
    font-size: 14.4px;
    letter-spacing: -.2px;
    font-weight: normal;
    color: var(--title);
}

.dialog-head b {
    font-size: 11px;
    color: #0b2a72;
}

.dialog-body {
    display: flex;
    padding: 20px 10px 0 9px;
}

.left-column {
    width: 162px;
    height: 375px;
    margin-top: 6px;
    border-right: 2px solid #999;
}

.available {
    width: 154px;
    height: 248px;
    margin-top: -6px;
    border-bottom: 2px solid #999;
    margin-bottom: 7px;
}

.item-list {
    width: 80px;
    height: 33px;
    margin-left: 2px;
    background: var(--chip);
    text-align: center;
}

.item-list span {
    display: block;
    padding-left: 5px;
    line-height: 16.5px;
}

.sep-row {
    display: flex;
    gap: 2px;
    margin: 0 0 1px 2px;
    white-space: nowrap;
}

.sep {
    width: 33px;
    height: 15.5px;
    background: var(--sep);
    padding: 2px 4px 0 5px;
    display: flex;
    justify-content: space-between;
    line-height: 14px;
}

.sep:not(:has(b)) {
    padding-left: 8px;
}

.sep.own:not(:has(b)) {
    width: 113px;
    padding: 1px 1px 0;
}

.sep b {
    color: #111;
    font-size: 10px;
    line-height: 10px;
}

.right-column {
    width: 308px;
    margin-left: 6px;
}

.drop-area {
    height: 184px;
    background: #e1e1e1;
    display: flex;
    gap: 6px;
    padding: 3px;
}

.chip {
    width: 80px;
    height: 16px;
    position: relative;
    background: var(--chip);
    line-height: 17px;
    text-align: center;
    padding-left: 5px;
}

.chip b {
    position: absolute;
    right: 2px;
    top: -2px;
    font-size: 10px;
    color: #111;
}

.dialog .preview-title {
    padding-top: 20px;
    line-height: 12px;
}

.preview-mode {
    height: 15px;
    display: flex;
    align-items: center;
}

.preview-mode span {
    margin: 0 6px 0 4px;
}

.dropdown {
    width: 101px;
    height: 15px;
    border: 1px solid #bbb;
    background: linear-gradient(#d9d9d9, #e5e5e5);
    display: flex;
    justify-content: flex-end;
}

.dropdown b {
    width: 12px;
    background: #c1c1c1;
    padding: 5px 3px;
}

.dropdown b::after {
    content: "";
    display: block;
    border: 3px solid transparent;
    border-top-color: #fff;
    border-bottom: 0;
}

.preview {
    height: 117px;
    margin-top: 6px;
    border: 1px solid #aaa;
    font: 10.7px/116px "Liberation Sans", sans-serif;
    letter-spacing: 0;
    text-align: center;
}

.next {
    width: 52px;
    height: 17px;
    margin: 3px 0 0 auto;
    background: #3350a4;
    border: 1px solid #263f88;
    color: #fff;
    font-size: 9.4px;
    letter-spacing: -.1px;
    line-height: 15px;
    text-align: center;
}

.click-glow {
    position: absolute;
    left: 49px;
    top: 70px;
    width: 36px;
    height: 34px;
    border-radius: 50%;
    background: radial-gradient(circle, rgba(90, 155, 225, .45) 30%, rgba(90, 155, 225, 0) 70%);
}

.cursor {
    position: absolute;
    left: 64px;
    top: 85px;
}

.tooltip {
    position: absolute;
    left: 65px;
    top: 99px;
    width: 26px;
    height: 15px;
    background: #fff;
    border: 1px solid #999;
    border-radius: 1px;
    box-shadow: 1px 1px 2px #777;
    line-height: 13px;
    text-align: center;
    color: #666;
}

/* corner wedges and brand mark */
.overlay {
    position: absolute;
    left: 0;
    top: 0;
}

.brand {
    position: absolute;
    left: 31px;
    top: 619px;
}

.brand-mark,
.brand-name {
    fill: #4f7bb0;
    filter: drop-shadow(.8px .8px 0 #0d376f) drop-shadow(-.5px -.4px 0 #0d376f);
}

.brand-name {
    font-family: Lato, sans-serif;
    font-size: 78px;
    stroke: #4f7bb0;
    stroke-width: 1.8px;
}

.reg {
    font-family: "Liberation Sans", sans-serif;
    font-size: 13px;
    fill: #1d4a83;
}
```
